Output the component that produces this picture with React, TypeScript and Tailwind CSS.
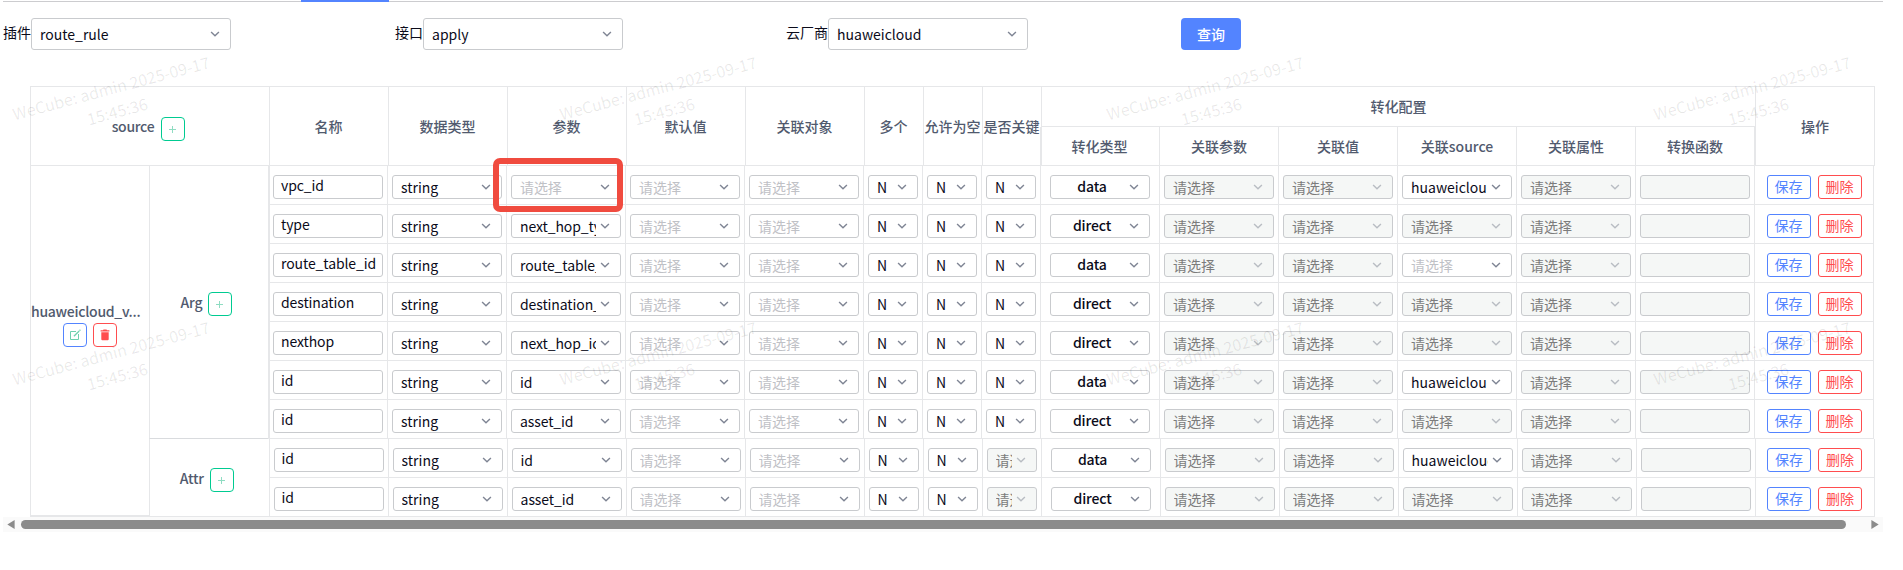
import type { ReactNode } from "react";

type Field = { text: string; disabled?: boolean; placeholder?: boolean };

type Row = {
  name: string;
  param: string;
  key: string;
  kind: string;
  source: string;
};

const PLACEHOLDER = "请选择";

const argRows: Row[] = [
  { name: "vpc_id", param: "", key: "N", kind: "data", source: "huaweicloud" },
  { name: "type", param: "next_hop_type", key: "N", kind: "direct", source: "-" },
  { name: "route_table_id", param: "route_table_id", key: "N", kind: "data", source: "" },
  { name: "destination", param: "destination_cidr", key: "N", kind: "direct", source: "-" },
  { name: "nexthop", param: "next_hop_id", key: "N", kind: "direct", source: "-" },
  { name: "id", param: "id", key: "N", kind: "data", source: "huaweicloud" },
  { name: "id", param: "asset_id", key: "N", kind: "direct", source: "-" },
];

const attrRows: Row[] = [
  { name: "id", param: "id", key: "-", kind: "data", source: "huaweicloud" },
  { name: "id", param: "asset_id", key: "-", kind: "direct", source: "-" },
];

function toField(value: string): Field {
  if (value === "") return { text: PLACEHOLDER, placeholder: true };
  if (value === "-") return { text: PLACEHOLDER, disabled: true };
  return { text: value };
}

function Chevron({ muted }: { muted?: boolean }) {
  return (
    <svg
      width="10"
      height="6"
      viewBox="0 0 10 6"
      fill="none"
      className={muted ? "shrink-0 text-[#b9bdc3]" : "shrink-0 text-[#808695]"}
    >
      <path d="M1.1 0.9L5 4.8L8.9 0.9" stroke="currentColor" strokeWidth="1.4" />
    </svg>
  );
}

function Select({ field, size, bold }: { field: Field; size: string; bold?: boolean }) {
  const tone = field.disabled
    ? "bg-[#f5f7f6] text-[#7c7c7c]"
    : field.placeholder
      ? "text-[#bfc1c6]"
      : "text-[#0b0b1a]";
  return (
    <div
      className={`flex items-center overflow-hidden rounded-[3px] border border-[#c9cbce] pl-2 pr-[10px] ${size} ${tone}`}
    >
      <span
        className={`min-w-0 flex-1 overflow-hidden whitespace-nowrap ${bold ? "-mt-0.5 text-center font-medium tracking-[-0.15px]" : ""}`}
      >
        {field.text}
      </span>
      <span className="ml-1 flex w-[10px] shrink-0 justify-center">
        <Chevron muted={field.disabled} />
      </span>
    </div>
  );
}

function Cell({ w, className, children }: { w: string; className?: string; children?: ReactNode }) {
  return (
    <div
      className={`flex h-[39px] shrink-0 justify-center border-b border-l border-[#e6e7e9] pt-[9px] ${w} ${className ?? ""}`}
    >
      {children}
    </div>
  );
}

function DataRow({ row, double }: { row: Row; double?: boolean }) {
  const off: Field = { text: PLACEHOLDER, disabled: true };
  const empty: Field = { text: PLACEHOLDER, placeholder: true };
  return (
    <div className="flex border-r border-[#e6e7e9]">
      <Cell w="w-[119px]" className={double ? "border-l-2 pr-px" : ""}>
        <div className="h-6 w-[110px] shrink-0 overflow-hidden whitespace-nowrap rounded-[3px] border border-[#c9cbce] pl-[7px] leading-[18px] tracking-[-0.1px] text-[#0b0b1a]">
          {row.name}
        </div>
      </Cell>
      <Cell w="w-[119px]"><Select field={{ text: "string" }} size="h-6 w-[110px]" /></Cell>
      <Cell w="w-[119px]"><Select field={toField(row.param)} size="h-6 w-[110px] tracking-[-0.1px]" /></Cell>
      <Cell w="w-[119px]"><Select field={empty} size="h-6 w-[110px]" /></Cell>
      <Cell w="w-[119px]"><Select field={empty} size="h-6 w-[110px]" /></Cell>
      <Cell w="w-[59px]"><Select field={{ text: "N" }} size="h-6 w-[50px]" /></Cell>
      <Cell w="w-[59px]"><Select field={{ text: "N" }} size="h-6 w-[50px]" /></Cell>
      <Cell w="w-[59px]"><Select field={toField(row.key)} size="h-6 w-[50px]" /></Cell>
      <Cell w="w-[119px]"><Select field={{ text: row.kind }} size="h-6 w-[100px]" bold /></Cell>
      <Cell w="w-[119px]"><Select field={off} size="h-6 w-[110px]" /></Cell>
      <Cell w="w-[119px]"><Select field={off} size="h-6 w-[110px]" /></Cell>
      <Cell w="w-[119px]"><Select field={toField(row.source)} size="h-6 w-[110px]" /></Cell>
      <Cell w="w-[119px]"><Select field={off} size="h-6 w-[110px]" /></Cell>
      <Cell w="w-[119px]">
        <div className="h-6 w-[110px] rounded-[3px] border border-[#c9cbce] bg-[#f5f7f6]" />
      </Cell>
      <Cell w="w-[119px]" className="gap-[7px]">
        <button className="h-6 w-11 rounded-[3px] border border-[#5384ff] pb-0.5 text-[#5384ff]">保存</button>
        <button className="h-6 w-11 rounded-[3px] border border-[#ff4d4f] pb-0.5 text-[#ff4d4f]">删除</button>
      </Cell>
    </div>
  );
}

function AddButton() {
  return (
    <button className="flex h-6 w-6 shrink-0 items-center justify-center rounded-[4px] border border-[#00cb91]">
      <svg width="7" height="7" viewBox="0 0 7 7" className="-ml-px" fill="none">
        <path d="M3.5 0V7M0 3.5H7" stroke="#8fdcc2" strokeWidth="1" />
      </svg>
    </button>
  );
}

function HeadCell({ w, className, children }: { w: string; className?: string; children: ReactNode }) {
  return (
    <div
      className={`flex shrink-0 items-center justify-center whitespace-nowrap border-l border-[#e6e7e9] ${w} ${className ?? ""}`}
    >
      {children}
    </div>
  );
}

function TableHead() {
  return (
    <div className="flex h-20 w-[1845px] border-b border-r border-t border-[#e6e7e9] font-medium text-[#515a6e]">
      <HeadCell w="w-[239px]" className="pr-[3px]">
        <span className="mr-[7px] tracking-[-0.3px]">source</span>
        <span className="mt-1.5"><AddButton /></span>
      </HeadCell>
      <HeadCell w="w-[119px]" className="pr-px">名称</HeadCell>
      <HeadCell w="w-[119px]" className="pr-px">数据类型</HeadCell>
      <HeadCell w="w-[119px]" className="pr-px">参数</HeadCell>
      <HeadCell w="w-[119px]" className="pr-px">默认值</HeadCell>
      <HeadCell w="w-[119px]" className="pr-px">关联对象</HeadCell>
      <HeadCell w="w-[59px]" className="pr-px">多个</HeadCell>
      <HeadCell w="w-[59px]" className="pr-px">允许为空</HeadCell>
      <HeadCell w="w-[59px]" className="pr-px">是否关键</HeadCell>
      <div className="flex w-[714px] shrink-0 flex-col">
        <div className="flex h-10 items-center justify-center border-b border-l border-[#e6e7e9] pb-px">转化配置</div>
        <div className="-ml-px flex flex-1 border-r border-[#e6e7e9]">
          <HeadCell w="w-[119px]" className="border-l-2 pr-0.5">转化类型</HeadCell>
          <HeadCell w="w-[119px]">关联参数</HeadCell>
          <HeadCell w="w-[119px]">关联值</HeadCell>
          <HeadCell w="w-[119px]">关联source</HeadCell>
          <HeadCell w="w-[119px]">关联属性</HeadCell>
          <HeadCell w="w-[119px]">转换函数</HeadCell>
        </div>
      </div>
      <HeadCell w="w-[119px]">操作</HeadCell>
    </div>
  );
}

function TableBody() {
  return (
    <div className="flex">
      <div className="flex h-[351px] w-[119px] shrink-0 flex-col items-center justify-center border-b-2 border-l border-[#e6e7e9] pb-[33px]">
        <span className="mb-0.5 w-full whitespace-nowrap font-medium tracking-[-0.28px] text-[#515a6e]">huaweicloud_v...</span>
        <div className="flex gap-1.5">
          <button className="flex h-6 w-6 items-center justify-center rounded-[4px] border border-[#5384ff]">
            <svg width="12" height="12" viewBox="0 0 12 12" fill="none" stroke="#6fd0ae" className="-ml-px">
              <path d="M7 2.5H1.5V10.5H9.5V5" strokeWidth="1" />
              <path d="M4.9 7.2L10.2 2" strokeWidth="1.3" />
              <path d="M10.5 1.6L11.4 0.7" strokeWidth="1.3" />
            </svg>
          </button>
          <button className="flex h-6 w-6 items-center justify-center rounded-[4px] border border-[#ff4d4f]">
            <svg width="10" height="12" viewBox="0 0 10 12" fill="#ff4d4f" className="-ml-px">
              <path d="M0.6 1.2H3L3.5 0.6H6.5L7 1.2H9.4V2.6H0.6Z" />
              <path d="M1.3 3.3H8.7V10.2Q8.7 11.2 7.7 11.2H2.3Q1.3 11.2 1.3 10.2Z" />
            </svg>
          </button>
        </div>
      </div>
      <div>
        <div className="flex">
          <div className="flex h-[273px] w-[119px] shrink-0 items-center justify-center border-b border-l border-[#d9dbde] border-l-[#e6e7e9] pr-[5px] font-medium text-[#515a6e]">
            <span className="mr-[6px] tracking-[-0.2px]">Arg</span>
            <span className="mt-1"><AddButton /></span>
          </div>
          <div>
            {argRows.map((row, i) => (
              <DataRow key={i} row={row} double />
            ))}
          </div>
        </div>
        <div className="flex">
          <div className="flex h-[78px] w-[119.6px] shrink-0 items-center justify-center border-b border-l border-[#e6e7e9] pr-[5px] font-medium text-[#515a6e]">
            <span className="mr-[6px] tracking-[-0.2px]">Attr</span>
            <span className="mt-[5px]"><AddButton /></span>
          </div>
          <div>
            {attrRows.map((row, i) => (
              <DataRow key={i} row={row} />
            ))}
          </div>
        </div>
      </div>
    </div>
  );
}

function Filter({ label, value }: { label: string; value: string }) {
  return (
    <label className="flex items-center text-[#0b0b1a]">
      <span className="-mt-1 whitespace-nowrap">{label}</span>
      <Select field={{ text: value }} size="h-8 w-[200px]" />
    </label>
  );
}

function Watermark() {
  return (
    <div className="pointer-events-none absolute inset-0 grid auto-rows-[265px] grid-cols-[repeat(4,547px)] overflow-hidden pt-[75px] text-[16px] leading-[24px] text-black/9">
      {Array.from({ length: 8 }, (_, i) => (
        <div key={i} className="h-12 w-[228px] -rotate-15 text-center">
          WeCube: admin 2025-09-17
          <br />
          15:45:36
        </div>
      ))}
    </div>
  );
}

export default function App() {
  return (
    <div className="relative h-[570px] w-full overflow-hidden bg-white font-['Noto_Sans_CJK_SC',sans-serif] text-[14px] leading-[20px]">
      <div className="ml-[3px] flex h-[2px] w-[1880px] items-end">
        <div className="h-px w-[298px] bg-[#cccccf]" />
        <div className="h-[2px] w-[88px] bg-[#5384ff]" />
        <div className="h-px flex-1 bg-[#cccccf]" />
      </div>
      <div className="ml-[3px] mt-4 flex h-8">
        <div className="w-[392px]"><Filter label="插件" value="route_rule" /></div>
        <div className="w-[391px]"><Filter label="接口" value="apply" /></div>
        <div className="w-[395px]"><Filter label="云厂商" value="huaweicloud" /></div>
        <button className="h-8 w-[60px] rounded-[4px] bg-[#5384ff] font-medium text-white">查询</button>
      </div>
      <div className="ml-[30px] mt-9">
        <TableHead />
        <TableBody />
      </div>
      <div className="ml-[3px] flex h-[15px] w-[1880px] items-center bg-[#fafafa] pl-1 pr-1">
        <svg width="8" height="9" viewBox="0 0 8 9" className="mr-[6px]" fill="#8b8b8b">
          <path d="M0.3 4.5L7.6 0V9Z" />
        </svg>
        <div className="h-[9px] w-[1825px] rounded-full bg-[#8b8b8b]" />
        <svg width="8" height="9" viewBox="0 0 8 9" className="ml-auto" fill="#8b8b8b">
          <path d="M7.7 4.5L0.4 0V9Z" />
        </svg>
      </div>
      <Watermark />
      <div className="absolute left-[493px] top-[158px] h-[54px] w-[130px] rounded-[7px] border-[6px] border-[#f04b3f]" />
    </div>
  );
}
